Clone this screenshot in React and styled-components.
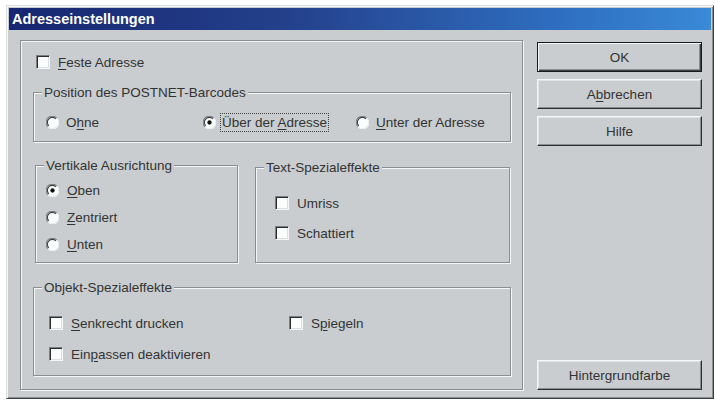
import React from 'react';
import styled, {createGlobalStyle} from 'styled-components';

const Global = createGlobalStyle`
  html, body { margin: 0; background: #fff; }
  body { font-family: "Liberation Sans", Arial, sans-serif; }
`;

const FACE = '#c9cdcf';

const Window = styled.div`
  margin: 5px 0 0 6px;
  width: 708px;
  height: 394px;
  box-sizing: border-box;
  background: ${FACE};
  border: 1px solid;
  border-color: #dcdfe1 #3c4042 #3c4042 #dcdfe1;
  box-shadow: inset 1px 1px 0 #f4f6f7, inset -1px -1px 0 #8a8e91;
  padding: 2px;
  display: flex;
  flex-direction: column;
`;

const TitleBar = styled.div`
  height: 22px;
  flex: none;
  display: flex;
  align-items: center;
  padding-left: 3px;
  background: linear-gradient(90deg, #172670 0%, #24418c 40%, #2f70c2 80%, #3a8ad6 100%);
  color: #fff;
  font-weight: bold;
  font-size: 14.5px;
`;

const Body = styled.div`
  flex: 1;
  display: flex;
  gap: 14px;
  padding: 10px 9px 6px 11px;
  min-height: 0;
`;

const Panel = styled.div`
  width: 503px;
  box-sizing: border-box;
  border: 1px solid #8a8e91;
  box-shadow: inset 1px 1px 0 #f4f6f7, 1px 1px 0 #f4f6f7;
  padding: 0 11px 0 12px;
  display: flex;
  flex-direction: column;
`;

const Group = styled.div`
  position: relative;
  box-sizing: border-box;
  width: ${p => p.$w || 'auto'};
  height: ${p => p.$h}px;
  margin-top: ${p => p.$top || 0}px;
  margin-left: ${p => p.$left || 0}px;
  padding: ${p => p.$pad};
  border: 1px solid #8a8e91;
  box-shadow: inset 1px 1px 0 #f4f6f7, 1px 1px 0 #f4f6f7;
  display: ${p => (p.$grid ? 'grid' : 'flex')};
  flex-direction: column;
  grid-template-columns: ${p => p.$grid || 'none'};
  align-content: start;
  gap: ${p => p.$gap || 0}px;
`;

const Legend = styled.span`
  position: absolute;
  top: -8px;
  left: 8px;
  padding: 0 2px;
  background: ${FACE};
  font-size: 13.5px;
  line-height: 16px;
  color: #333;
  white-space: nowrap;
`;

const Row = styled.div`
  display: flex;
  gap: 17px;
  align-items: flex-start;
  margin-top: ${p => p.$top || 0}px;
`;

const Option = styled.label`
  display: flex;
  align-items: center;
  height: 16px;
  gap: ${p => p.$gap || 8}px;
  margin-top: ${p => p.$top || 0}px;
  margin-left: ${p => p.$left || 0}px;
  font-size: 13.5px;
  color: #333;
  white-space: nowrap;
`;

const Box = styled.span`
  flex: none;
  width: 14px;
  height: 14px;
  box-sizing: border-box;
  background: #fbfcfc;
  border: 1px solid;
  border-color: #7a7e81 #f4f6f7 #f4f6f7 #7a7e81;
  box-shadow: inset 1px 1px 0 #2c2c2c, inset -1px -1px 0 #dcdfe1;
`;

const Key = styled.span`
  text-decoration: underline;
  text-underline-offset: 2px;
`;

const Focus = styled.span`
  outline: 1px dotted #444;
  outline-offset: 1px;
`;

const Column = styled.div`
  width: 165px;
  display: flex;
  flex-direction: column;
  gap: 7px;
  padding-top: 2px;
`;

const Button = styled.button`
  height: 30px;
  width: 100%;
  box-sizing: border-box;
  margin-top: ${p => (p.$bottom ? 'auto' : '0')};
  background: ${FACE};
  font-family: inherit;
  font-size: 13.5px;
  color: #333;
  padding: 0;
  border: 1px solid;
  border-color: ${p => (p.$default ? '#1a1a1a' : '#f4f6f7 #2c3032 #2c3032 #f4f6f7')};
  box-shadow: ${p =>
    p.$default
      ? 'inset 1px 1px 0 #f4f6f7, inset -1px -1px 0 #3c4042, inset -2px -2px 0 #8a8e91'
      : 'inset -1px -1px 0 #8a8e91, inset 1px 1px 0 #e0e3e5'};
`;

function Radio({checked}) {
  return (
    <svg width="13" height="13" viewBox="0 0 12 12" style={{flex: 'none'}}>
      <circle cx="6" cy="6" r="5.5" fill="#fbfcfc" />
      <path d="M1.8 9.9 A5.5 5.5 0 0 1 9.9 1.8" fill="none" stroke="#7a7e81" strokeWidth="1" />
      <path d="M2.6 9.1 A4.5 4.5 0 0 1 9.1 2.6" fill="none" stroke="#3a3a3a" strokeWidth="1" />
      <path d="M10.2 2.1 A5.5 5.5 0 0 1 2.1 10.2" fill="none" stroke="#eef0f1" strokeWidth="1" />
      {checked && <circle cx="6" cy="6" r="2" fill="#111" />}
    </svg>
  );
}

export default function App() {
  return (
    <>
      <Global />
      <Window>
        <TitleBar>Adresseinstellungen</TitleBar>
        <Body>
          <Panel>
            <Option $top={13} $left={3}>
              <Box /><span><Key>F</Key>este Adresse</span>
            </Option>

            <Group $h={50} $top={22} $pad="21px 0 0 12px" $grid="157px 153px auto">
              <Legend>Position des POSTNET-Barcodes</Legend>
              <Option $gap={7}><Radio /><span>O<Key>h</Key>ne</span></Option>
              <Option $gap={6}><Radio checked /><Focus>Über der <Key>A</Key>dresse</Focus></Option>
              <Option $gap={7}><Radio /><span><Key>U</Key>nter der Adresse</span></Option>
            </Group>

            <Row $top={23}>
              <Group $w="203px" $h={98} $left={2} $pad="16px 0 0 10px" $gap={11}>
                <Legend>Vertikale Ausrichtung</Legend>
                <Option><Radio checked /><span><Key>O</Key>ben</span></Option>
                <Option><Radio /><span><Key>Z</Key>entriert</span></Option>
                <Option><Radio /><span><Key>U</Key>nten</span></Option>
              </Group>
              <Group $w="255px" $h={96} $top={2} $pad="27px 0 0 19px" $gap={14}>
                <Legend>Text-Spezialeffekte</Legend>
                <Option><Box /><span>Umriss</span></Option>
                <Option><Box /><span>Schattiert</span></Option>
              </Group>
            </Row>

            <Group $h={89} $top={24} $pad="27px 0 0 15px" $gap={15} $grid="225px auto">
              <Legend>Objekt-Spezialeffekte</Legend>
              <Option><Box /><span><Key>S</Key>enkrecht drucken</span></Option>
              <Option><Box /><span>S<Key>p</Key>iegeln</span></Option>
              <Option><Box /><span>Ein<Key>p</Key>assen deaktivieren</span></Option>
            </Group>
          </Panel>

          <Column>
            <Button $default>OK</Button>
            <Button>A<Key>b</Key>brechen</Button>
            <Button>Hilfe</Button>
            <Button $bottom>Hinter<Key>g</Key>rundfarbe</Button>
          </Column>
        </Body>
      </Window>
    </>
  );
}
